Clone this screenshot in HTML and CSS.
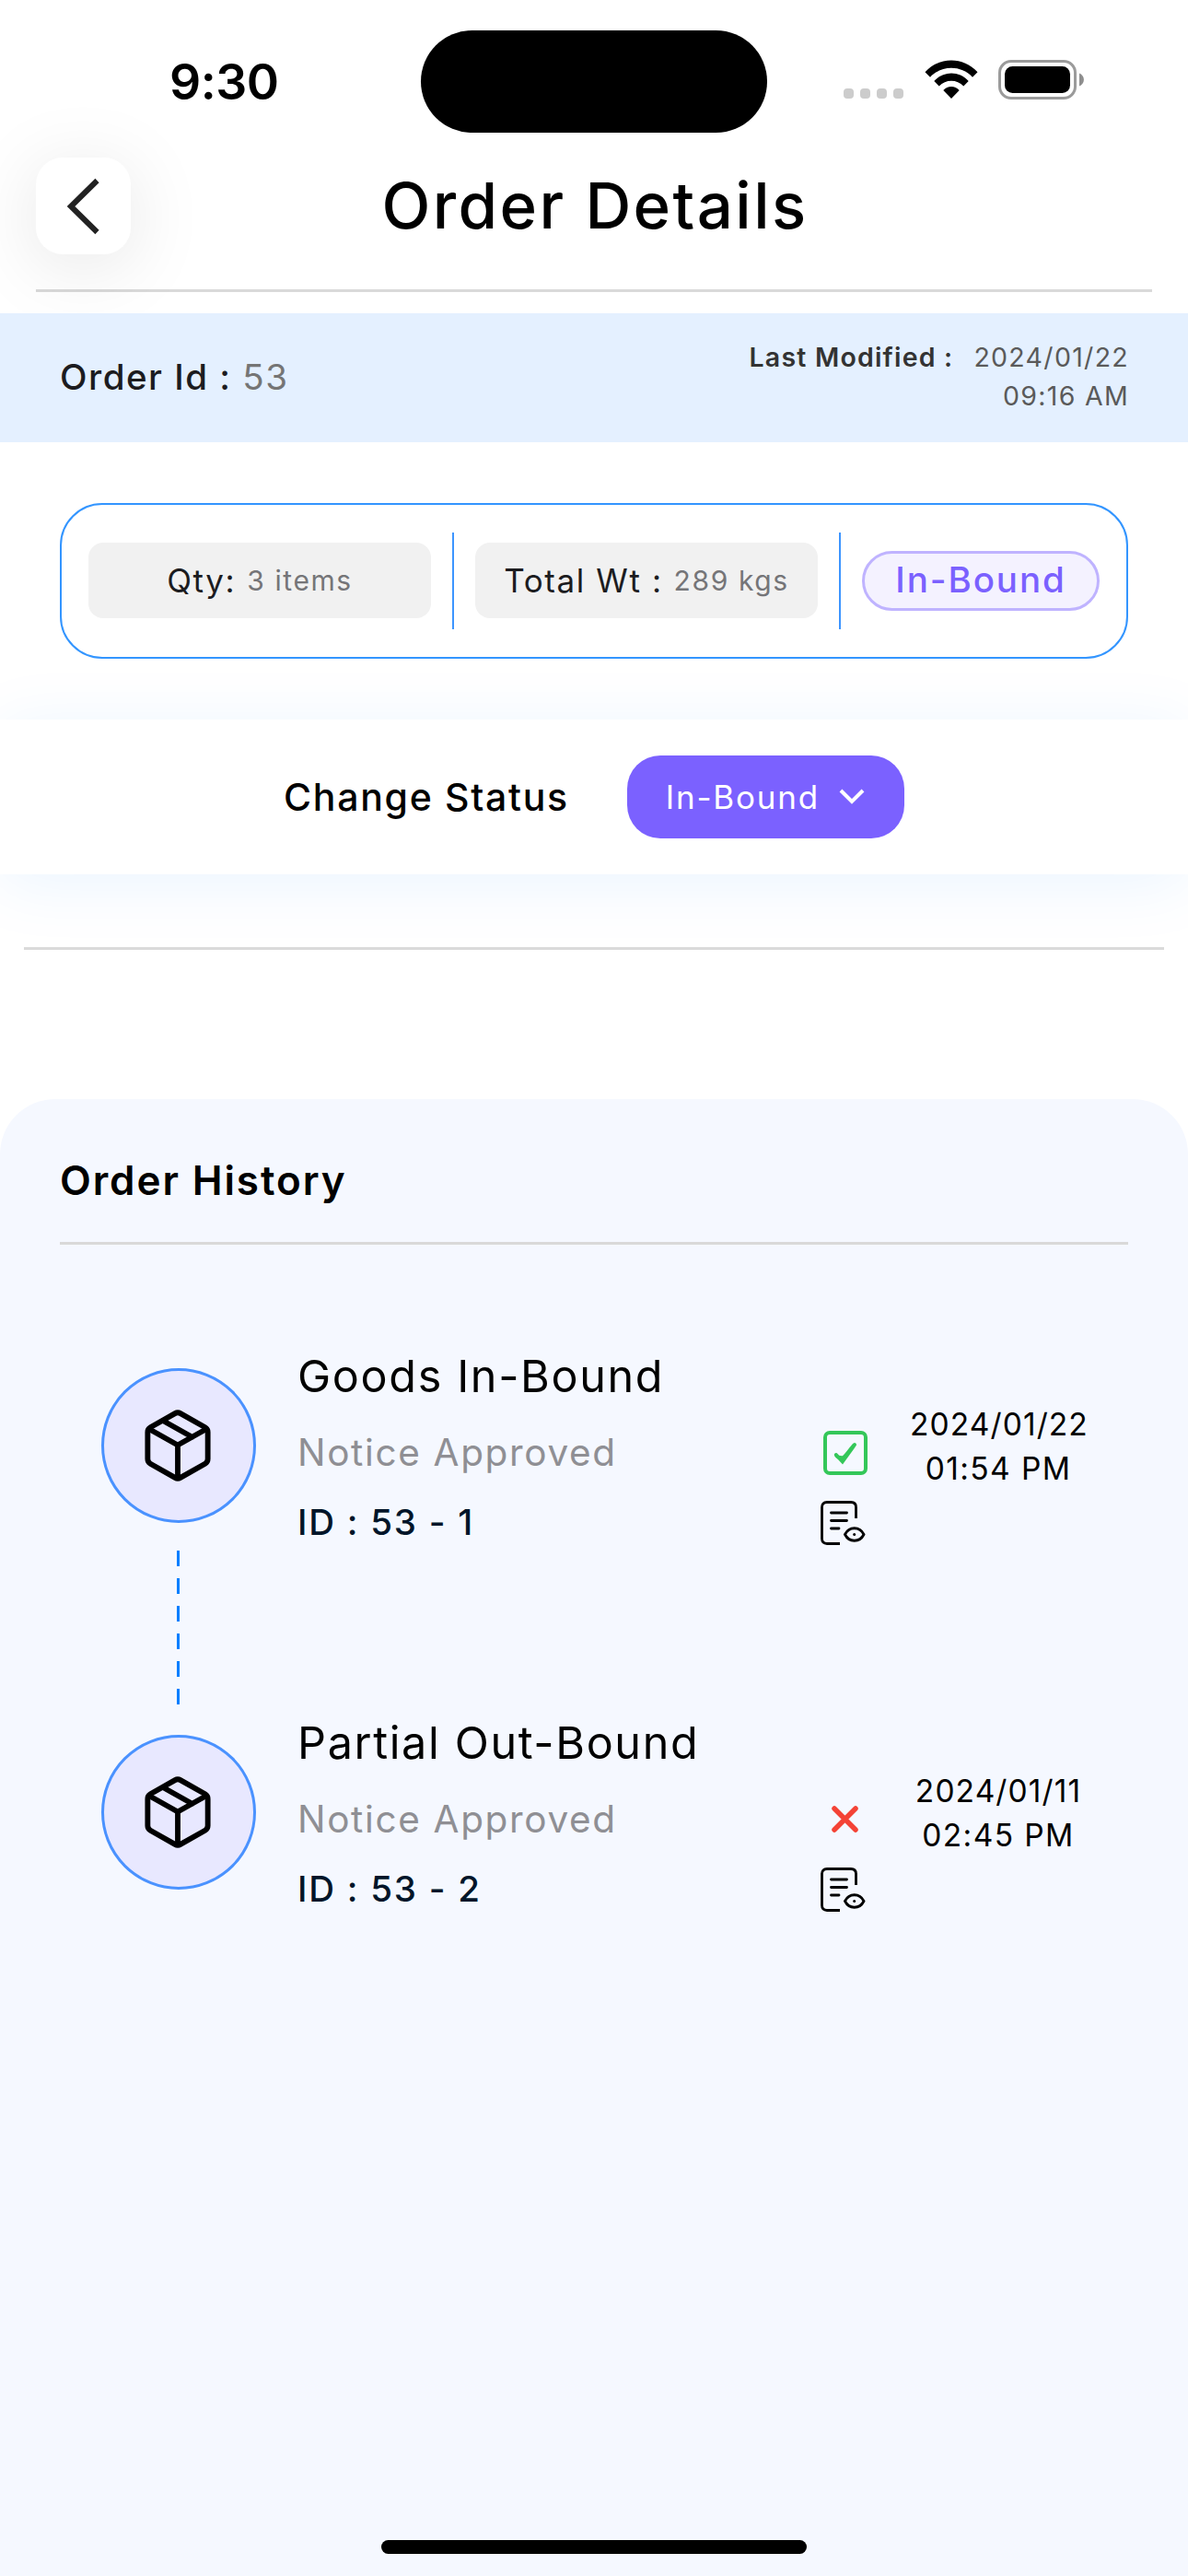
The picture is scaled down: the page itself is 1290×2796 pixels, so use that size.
FILE: index.html
```html
<!DOCTYPE html>
<html lang="en">
<head>
<meta charset="utf-8">
<title>Order Details</title>
<link rel="stylesheet" href="styles.css">
</head>
<body>
<svg class="defs" width="0" height="0" aria-hidden="true">
  <symbol id="box" viewBox="0 0 78 84">
    <g fill="none" stroke="#000" stroke-width="6" stroke-linejoin="round" stroke-linecap="round">
      <path d="M36 6.200Q39 4.500 42 6.200L69.500 21.800Q72.500 23.500 72.500 27V57Q72.500 60.500 69.500 62.200L42 77.800Q39 79.500 36 77.800L8.500 62.200Q5.500 60.500 5.500 57V27Q5.500 23.500 8.500 21.800Z"/>
      <path d="M7 23.500L39 41.500L71 23.500M39 41.500V78M23 14.500L55 32.500"/>
    </g>
  </symbol>
  <symbol id="doc" viewBox="0 0 50 50">
    <g fill="none" stroke="#000" stroke-width="2.800" stroke-linecap="round">
      <path d="M22 47.500H8Q2.500 47.500 2.500 42V8Q2.500 2.500 8 2.500H34Q39.500 2.500 39.500 8V20" stroke-linecap="butt"/>
      <path d="M12.500 14H29.500M12.500 22.500H29.500M12.500 31H21"/>
      <path d="M27.500 37.500C32 28.500 43.500 28.500 48 37.500C43.500 46.500 32 46.500 27.500 37.500Z"/>
    </g>
    <circle cx="37.700" cy="37.500" r="1.500"/>
  </symbol>
</svg>
<header class="status-bar">
  <div class="time">9:30</div>
  <div class="island"></div>
  <div class="indicators">
    <div class="dots"><i></i><i></i><i></i><i></i></div>
    <svg class="wifi" width="58" height="43" viewBox="0 0 58 43">
      <path d="M0.500 13.200C16 -3.800 42 -3.800 57.500 13.200L52 18.700C39.500 5.500 18.500 5.500 6 18.700ZM10.300 23C20.500 11.800 37.500 11.800 47.700 23L42.300 28.500C35 20.800 23 20.800 15.700 28.500ZM20.300 33C25 27.800 33 27.800 37.700 33L29 42Z"/>
    </svg>
    <svg class="battery" width="94" height="43" viewBox="0 0 94 43">
      <rect x="1.500" y="1.500" width="82" height="40" rx="12.500" fill="none" stroke="#9b9b9b" stroke-width="3"/>
      <rect x="7" y="7" width="71" height="29" rx="8.500"/>
      <path d="M88 14.500C94.500 17 94.500 26 88 28.500Z" fill="#8e8e8e"/>
    </svg>
  </div>
</header>
<nav class="title-bar">
  <div class="back"><svg width="40" height="64" viewBox="0 0 40 64"><path d="M34.500 4L6 32L34.500 60" fill="none" stroke="#222" stroke-width="6"/></svg></div>
  <h1>Order Details</h1>
</nav>
<section class="order-band">
  <div class="order-id">Order Id : <span>53</span></div>
  <div class="modified">
    <div class="mod-row"><b>Last Modified :</b><em>2024/01/22</em></div>
    <div class="mod-time">09:16 AM</div>
  </div>
</section>
<section class="summary">
  <div class="fact"><span>Qty:</span><small>3 items</small></div>
  <div class="rule"></div>
  <div class="fact"><span>Total Wt :</span><small>289 kgs</small></div>
  <div class="rule"></div>
  <div class="pill">In-Bound</div>
</section>
<section class="change">
  <div class="change-label">Change Status</div>
  <div class="select"><span>In-Bound</span><svg width="30" height="20" viewBox="0 0 30 20"><path d="M3 3L15 15L27 3" fill="none" stroke="#fff" stroke-width="4"/></svg></div>
</section>
<div class="divider"></div>
<main class="history">
  <h2>Order History</h2>
  <article class="item">
    <div class="node"><svg width="76" height="82"><use href="#box"/></svg></div>
    <div class="info">
      <div class="name">Goods In-Bound</div>
      <div class="note">Notice Approved</div>
      <div class="ref">ID : 53 - 1</div>
    </div>
    <div class="marks">
      <svg width="48" height="48" viewBox="0 0 48 48"><rect x="2" y="2" width="44" height="44" rx="5" fill="none" stroke="#34c759" stroke-width="4"/><path d="M13.800 26C15.500 29 18 29.800 21.500 29.200C25 27 30 18.500 34 15" fill="none" stroke="#34c759" stroke-width="4" stroke-linecap="round"/><path d="M12.200 27L21 36.500L35.500 16.500L25 25L21 28L16 27Z" fill="#34c759"/></svg>
      <svg class="doc" width="50" height="50"><use href="#doc"/></svg>
    </div>
    <div class="when"><div class="date">2024/01/22</div><div class="clock">01:54 PM</div></div>
  </article>
  <div class="dashes"><i></i><i></i><i></i><i></i><i></i><i></i></div>
  <article class="item">
    <div class="node"><svg width="76" height="82"><use href="#box"/></svg></div>
    <div class="info">
      <div class="name">Partial Out-Bound</div>
      <div class="note">Notice Approved</div>
      <div class="ref">ID : 53 - 2</div>
    </div>
    <div class="marks">
      <svg width="48" height="48" viewBox="0 0 48 48"><path d="M12 12L35 35M35 12L12 35" fill="none" stroke="#f44336" stroke-width="5.500" stroke-linecap="round"/></svg>
      <svg class="doc" width="50" height="50"><use href="#doc"/></svg>
    </div>
    <div class="when"><div class="date">2024/01/11</div><div class="clock">02:45 PM</div></div>
  </article>
  <div class="home"></div>
</main>
</body>
</html>
```
FILE: styles.css
```css
* { box-sizing: border-box; }
body {
  margin: 0;
  width: 1290px;
  height: 2796px;
  display: flex;
  flex-direction: column;
  background: #fff;
  color: #000;
  font-family: Inter, "Liberation Sans", sans-serif;
  letter-spacing: 1.5px;
  white-space: nowrap;
  overflow: hidden;
}
svg { display: block; flex: none; }
h1, h2 { margin: 0; }
.defs { position: absolute; }

.status-bar {
  height: 171px;
  flex: none;
  display: grid;
  grid-template-columns: 457px 376px 1fr;
  align-items: start;
}
.time {
  padding: 55px 0 0 184px;
  font-size: 53.5px;
  line-height: 67px;
  font-weight: 600;
  letter-spacing: -0.5px;
}
.island { height: 111px; margin-top: 33px; border-radius: 56px; background: #000; }
.indicators { display: flex; padding: 65px 0 0 83px; }
.dots { display: flex; gap: 7px; padding-top: 31px; width: 88px; }
.dots i { width: 11px; height: 11px; border-radius: 4px; background: #ccc; }
.battery { margin-left: 22px; }

.title-bar {
  height: 146px;
  flex: none;
  margin: 0 39px;
  display: grid;
  grid-template-columns: 103px 1fr 103px;
  align-items: start;
  border-bottom: 3px solid #d9d9d9;
}
.back {
  height: 105px;
  border-radius: 29px;
  background: #fff;
  display: flex;
  align-items: center;
  justify-content: center;
  box-shadow: 0 12px 84px rgba(0, 0, 0, 0.1);
}
h1 { padding-left: 2px; text-align: center; font-size: 69px; line-height: 104px; font-weight: 500; letter-spacing: 2.400px; }

.order-band {
  height: 140px;
  margin-top: 23px;
  flex: none;
  background: #e4f0ff;
  display: flex;
  justify-content: space-between;
  padding: 0 64px 0 65px;
}
.order-id { font-size: 38.5px; line-height: 139px; font-weight: 500; color: #1c1c1f; letter-spacing: 1.500px; }
.order-id span { font-weight: 400; color: #757575; }
.modified { padding-top: 27px; font-size: 28.5px; line-height: 42px; color: #5a5a5a; text-align: right; letter-spacing: 1.300px; }
.mod-row { display: flex; gap: 22px; }
.modified b { font-weight: 600; color: #333; letter-spacing: 1.200px; }
.modified em { font-style: normal; }

.summary {
  height: 169px;
  margin: 66px 65px 0;
  flex: none;
  border: 2px solid #3395ff;
  border-radius: 46px;
  display: flex;
  align-items: center;
  justify-content: space-between;
  padding: 0 29px;
}
.fact {
  width: 372px;
  height: 82px;
  margin-bottom: 2px;
  border-radius: 16px;
  background: #f1f1f1;
  display: flex;
  align-items: center;
  justify-content: center;
  gap: 12px;
  line-height: 82px;
  font-size: 35px;
  letter-spacing: 1.600px;
  color: #1c1c1f;
}
.fact small { font-size: 30px; color: #757578; }
.rule { width: 2px; height: 105px; background: #3d95ff; }
.pill {
  width: 258px;
  height: 65px;
  border: 3px solid #bfb3ff;
  border-radius: 33px;
  background: #f4f2ff;
  color: #7b61ff;
  text-align: center;
  font-size: 38.5px;
  font-weight: 500;
  line-height: 57px;
  letter-spacing: 1.900px;
}

.change {
  height: 168px;
  margin-top: 66px;
  flex: none;
  display: flex;
  align-items: center;
  justify-content: center;
  gap: 63px;
  background: #fff;
  box-shadow: 0 9px 72px rgba(0, 127, 255, 0.085);
}
.change-label { font-size: 41px; font-weight: 500; letter-spacing: 1.700px; }
.select {
  width: 301px;
  height: 90px;
  border-radius: 36px;
  background: #7b61ff;
  color: #fff;
  display: flex;
  align-items: center;
  justify-content: center;
  gap: 20px;
  font-size: 35px;
  letter-spacing: 1.800px;
}
.divider { height: 3px; margin: 79px 26px 0; flex: none; background: #dadada; }

.history {
  flex: 1;
  margin-top: 162px;
  background: #f5f8ff;
  border-radius: 60px 60px 0 0;
  padding: 0 65px;
  display: flex;
  flex-direction: column;
}
h2 {
  height: 158px;
  padding-top: 61px;
  font-size: 44px;
  line-height: 54px;
  font-weight: 580;
  letter-spacing: 1.900px;
  border-bottom: 3px solid #d9d9d9;
  margin-bottom: 134px;
  flex: none;
}
.item {
  height: 168px;
  flex: none;
  display: grid;
  grid-template-columns: 168px 569px 141px 192px;
  margin-left: 45px;
}
.node {
  width: 168px;
  height: 168px;
  border: 3px solid #4a92ff;
  border-radius: 50%;
  background: #e8e8ff;
  display: flex;
  align-items: center;
  justify-content: center;
  padding-right: 2px;
}
.info { padding-left: 45px; margin-top: -21px; letter-spacing: 1.650px; }
.name { font-size: 48.5px; line-height: 60px; }
.note { font-size: 40.500px; line-height: 50px; margin-top: 28px; color: #8f8f94; }
.ref { font-size: 38.5px; line-height: 50px; margin-top: 25px; font-weight: 500; color: #001529; letter-spacing: 1.750px; }
.marks { padding: 68px 0 0 47px; }
.doc { margin: 27px 0 0 -4px; }
.when { padding-top: 37px; font-size: 33.500px; line-height: 48px; text-align: center; letter-spacing: 1.100px; }
.clock { letter-spacing: 1.400px; }
.dashes { display: flex; flex-direction: column; gap: 13px; margin: 30px 0 33px 82px; padding-left: 45px; }
.dashes i { width: 3px; height: 17px; background: #007fff; }
.home { width: 462px; height: 15px; border-radius: 8px; background: #000; margin: auto auto 24px; }
```
